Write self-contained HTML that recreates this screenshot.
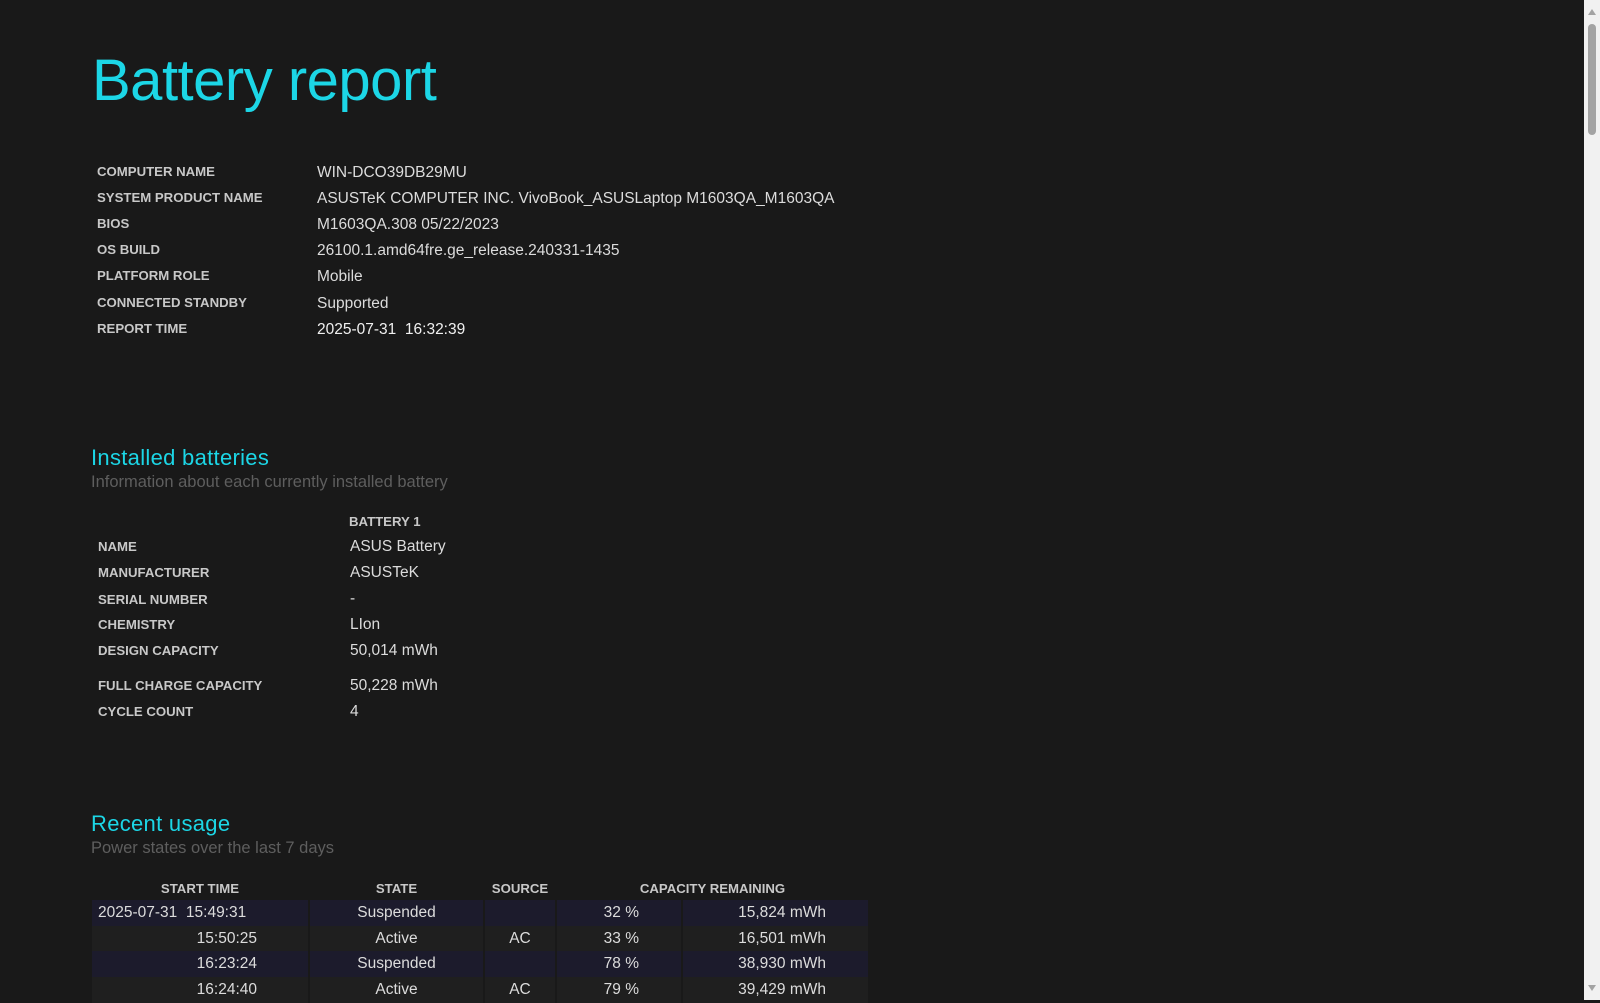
<!DOCTYPE html>
<html><head><meta charset="utf-8"><style>
html,body{margin:0;padding:0;width:1600px;height:1000px;overflow:hidden;background:#191919;font-family:"Liberation Sans","DejaVu Sans",sans-serif;}
.a{position:absolute;white-space:nowrap;}
.t{left:92px;top:47px;font-size:58px;color:#1cd6e6;letter-spacing:-0.5px;}
.l{font-size:13.2px;font-weight:bold;color:#c8c8c8;line-height:16px;}
.v{font-size:15.5px;color:#dcdcdc;line-height:18px;}
.h2{font-size:22px;color:#1cd6e6;letter-spacing:0.3px;}
.sub{font-size:16.5px;color:#5e5e5e;}
table{position:absolute;left:90px;top:876px;border-collapse:separate;border-spacing:2px 0;table-layout:fixed;width:780px;font-size:15.5px;color:#dcdcdc;}
th{font-size:13.2px;font-weight:bold;color:#c8c8c8;height:24px;text-align:center;padding:0;}
td{height:25.7px;padding:0 6px;box-sizing:border-box;overflow:hidden;white-space:nowrap;}
tr.o td{background:#1c1b2c;}
tr.e td{background:#1f1f1f;}
.sb{position:absolute;left:1584px;top:0;width:16px;height:1000px;background:#f1f1f1;}
</style></head><body>
<div class="a t">Battery report</div>

<div class="a l" style="left:97px;top:164px">COMPUTER NAME</div>
<div class="a l" style="left:97px;top:190px">SYSTEM PRODUCT NAME</div>
<div class="a l" style="left:97px;top:216px">BIOS</div>
<div class="a l" style="left:97px;top:242px">OS BUILD</div>
<div class="a l" style="left:97px;top:268px">PLATFORM ROLE</div>
<div class="a l" style="left:97px;top:295px">CONNECTED STANDBY</div>
<div class="a l" style="left:97px;top:321px">REPORT TIME</div>
<div class="a v" style="left:317px;top:164px">WIN-DCO39DB29MU</div>
<div class="a v" style="left:317px;top:190px">ASUSTeK COMPUTER INC. VivoBook_ASUSLaptop M1603QA_M1603QA</div>
<div class="a v" style="left:317px;top:216px">M1603QA.308 05/22/2023</div>
<div class="a v" style="left:317px;top:242px">26100.1.amd64fre.ge_release.240331-1435</div>
<div class="a v" style="left:317px;top:268px">Mobile</div>
<div class="a v" style="left:317px;top:295px">Supported</div>
<div class="a v" style="left:317px;top:321px;color:#f0f0f0">2025-07-31 &nbsp;16:32:39</div>

<div class="a h2" style="left:91px;top:445px">Installed batteries</div>
<div class="a sub" style="left:91px;top:473px">Information about each currently installed battery</div>
<div class="a l" style="left:349px;top:514px">BATTERY 1</div>
<div class="a l" style="left:98px;top:539px">NAME</div>
<div class="a l" style="left:98px;top:565px">MANUFACTURER</div>
<div class="a l" style="left:98px;top:592px">SERIAL NUMBER</div>
<div class="a l" style="left:98px;top:617px">CHEMISTRY</div>
<div class="a l" style="left:98px;top:643px">DESIGN CAPACITY</div>
<div class="a l" style="left:98px;top:678px">FULL CHARGE CAPACITY</div>
<div class="a l" style="left:98px;top:704px">CYCLE COUNT</div>
<div class="a v" style="left:350px;top:538px">ASUS Battery</div>
<div class="a v" style="left:350px;top:564px">ASUSTeK</div>
<div class="a v" style="left:350px;top:590px">-</div>
<div class="a v" style="left:350px;top:616px">LIon</div>
<div class="a v" style="left:350px;top:642px">50,014 mWh</div>
<div class="a v" style="left:350px;top:677px">50,228 mWh</div>
<div class="a v" style="left:350px;top:703px">4</div>

<div class="a h2" style="left:91px;top:811px">Recent usage</div>
<div class="a sub" style="left:91px;top:839px">Power states over the last 7 days</div>

<table>
<colgroup><col style="width:216px"><col style="width:173px"><col style="width:70px"><col style="width:124px"><col style="width:185px"></colgroup>
<tr><th>START TIME</th><th>STATE</th><th>SOURCE</th><th colspan="2">CAPACITY REMAINING</th></tr>
<tr class="o"><td>2025-07-31 &nbsp;15:49:31</td><td style="text-align:center">Suspended</td><td style="text-align:center"></td><td style="text-align:right;padding-right:42px">32 %</td><td style="text-align:right;padding-right:42px">15,824 mWh</td></tr>
<tr class="e"><td style="text-align:right;padding-right:51px">15:50:25</td><td style="text-align:center">Active</td><td style="text-align:center">AC</td><td style="text-align:right;padding-right:42px">33 %</td><td style="text-align:right;padding-right:42px">16,501 mWh</td></tr>
<tr class="o"><td style="text-align:right;padding-right:51px">16:23:24</td><td style="text-align:center">Suspended</td><td style="text-align:center"></td><td style="text-align:right;padding-right:42px">78 %</td><td style="text-align:right;padding-right:42px">38,930 mWh</td></tr>
<tr class="e"><td style="text-align:right;padding-right:51px">16:24:40</td><td style="text-align:center">Active</td><td style="text-align:center">AC</td><td style="text-align:right;padding-right:42px">79 %</td><td style="text-align:right;padding-right:42px">39,429 mWh</td></tr>
</table>

<div class="sb">
<svg width="16" height="1000" style="position:absolute;left:0;top:0">
<polygon points="4,15 12,15 8,9" fill="#a3a3a3"/>
<rect x="4" y="24" width="8" height="111" rx="4" fill="#a3a3a3"/>
<polygon points="4,985 12,985 8,991" fill="#a3a3a3"/>
</svg>
</div>
</body></html>
